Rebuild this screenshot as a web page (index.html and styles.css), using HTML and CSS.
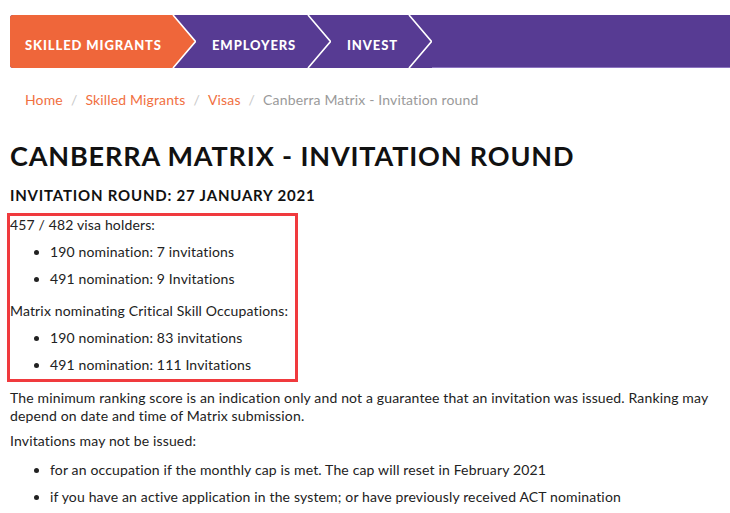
FILE: index.html
```html
<!DOCTYPE html>
<html>
<head>
<meta charset="utf-8">
<link rel="stylesheet" href="styles.css">
</head>
<body>
<nav class="topnav">
  <a class="nav-item nav-first">SKILLED MIGRANTS</a>
  <svg class="chev" viewBox="0 0 24 53" width="24" height="53"><polygon points="0,0 1,0 23.5,26.5 1,53 0,53" fill="#ef663a"/><polyline points="1,0 23.5,26.5 1,53" fill="none" stroke="#fff" stroke-width="1.6"/></svg>
  <a class="nav-item nav-second">EMPLOYERS</a>
  <svg class="chev" viewBox="0 0 24 53" width="24" height="53"><polyline points="1,0 23.5,26.5 1,53" fill="none" stroke="#fff" stroke-width="1.6"/></svg>
  <a class="nav-item nav-third">INVEST</a>
  <svg class="chev" viewBox="0 0 24 53" width="24" height="53"><polyline points="1,0 23.5,26.5 1,53" fill="none" stroke="#fff" stroke-width="1.6"/></svg>
  <div class="nav-fill"></div>
</nav>
<main class="content">
  <ol class="crumbs">
    <li><a>Home</a></li>
    <li class="sep">/</li>
    <li><a>Skilled Migrants</a></li>
    <li class="sep">/</li>
    <li><a>Visas</a></li>
    <li class="sep">/</li>
    <li class="current">Canberra Matrix - Invitation round</li>
  </ol>
  <h1 class="title">CANBERRA MATRIX - INVITATION ROUND</h1>
  <h2 class="subtitle">INVITATION ROUND: 27 JANUARY 2021</h2>
  <div class="highlight">
    <p class="para">457 / 482 visa holders:</p>
    <ul class="list">
      <li>190 nomination: 7 invitations</li>
      <li>491 nomination: 9 Invitations</li>
    </ul>
    <p class="para">Matrix nominating Critical Skill Occupations:</p>
    <ul class="list last">
      <li>190 nomination: 83 invitations</li>
      <li>491 nomination: 111 Invitations</li>
    </ul>
  </div>
  <p class="para after">The minimum ranking score is an indication only and not a guarantee that an invitation was issued. Ranking may depend on date and time of Matrix submission.</p>
  <p class="para intro">Invitations may not be issued:</p>
  <ul class="list bottom">
    <li>for an occupation if the monthly cap is met. The cap will reset in February 2021</li>
    <li>if you have an active application in the system; or have previously received ACT nomination</li>
  </ul>
</main>
</body>
</html>
```
FILE: styles.css
```css
html, body {
  margin: 0;
  padding: 0;
  background: #fff;
}
body {
  font-family: Lato, "Liberation Sans", sans-serif;
  color: #222;
  font-size: 14px;
  letter-spacing: 0.15px;
}
.topnav {
  display: flex;
  height: 53px;
  margin: 15px 0 0 10px;
  background: #573b93;
  border-radius: 3px 0 0 3px;
  overflow: hidden;
}
.nav-item {
  display: flex;
  align-items: center;
  box-sizing: border-box;
  height: 53px;
  padding-top: 6px;
  color: #fff;
  font-weight: 900;
  font-size: 13px;
  letter-spacing: 0.9px;
  white-space: nowrap;
}
.nav-first {
  width: 162px;
  padding-left: 15px;
  background: #ef663a;
}
.nav-second {
  width: 111px;
  padding-left: 16px;
}
.nav-third {
  width: 77px;
  padding-left: 16px;
}
.chev {
  display: block;
  flex: none;
}
.nav-fill {
  flex: 1;
  box-sizing: border-box;
  border-bottom: 1px solid #8c74c0;
}
.content {
  padding: 0 10px;
}
.crumbs {
  display: flex;
  list-style: none;
  margin: 0;
  padding: 23px 0 0 15px;
  line-height: 18px;
  font-size: 14px;
}
.crumbs a {
  color: #f1703f;
}
.crumbs .sep {
  color: #c8c8c8;
  padding: 0 8px;
}
.crumbs .current {
  color: #9a9a9a;
}
.title {
  margin: 32px 0 0;
  font-size: 27px;
  line-height: 30px;
  font-weight: 700;
  letter-spacing: 0.85px;
  color: #111;
}
.subtitle {
  margin: 15px 0 0;
  font-size: 15px;
  line-height: 18px;
  font-weight: 700;
  letter-spacing: 0.8px;
  color: #111;
}
.highlight {
  box-sizing: border-box;
  width: 291px;
  margin: 9px 0 0 -3px;
  border: 3px solid #f03a3e;
  padding: 0 0 5px 0;
}
.para {
  margin: 0 0 9px;
  line-height: 18px;
}
.list {
  margin: 0 0 14px;
  padding-left: 40px;
  line-height: 18px;
}
.list li {
  margin-bottom: 9px;
}
.list.last {
  margin-bottom: 0;
}
.list.last li:last-child {
  margin-bottom: 0;
}
.after {
  margin-top: 7px;
  margin-bottom: 7px;
}
.intro {
  margin-bottom: 11px;
}
```
